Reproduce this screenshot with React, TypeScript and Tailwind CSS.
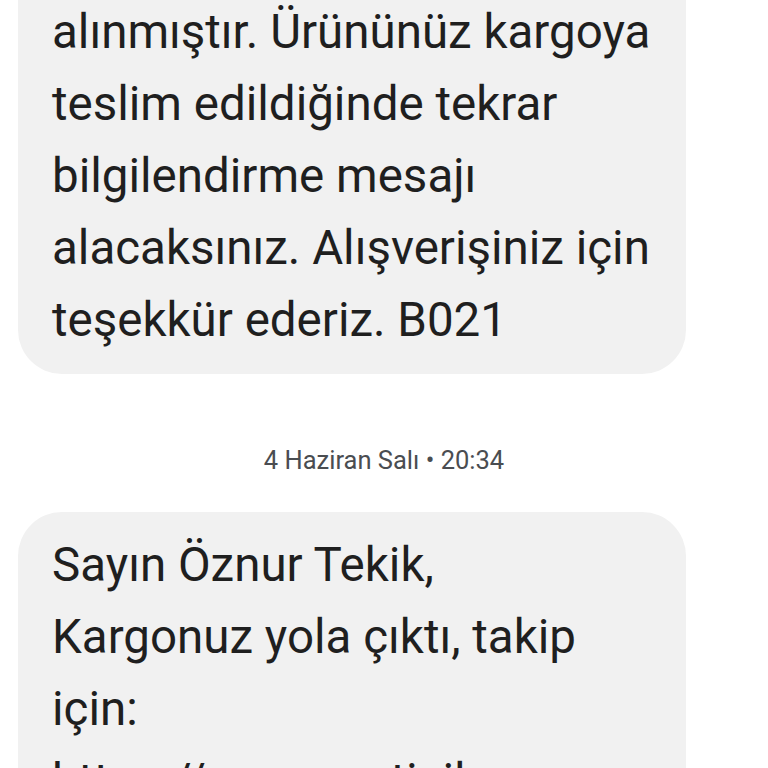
export default function App() {
  const font = { fontFamily: 'Roboto, "Noto Sans", sans-serif' };
  return (
    <div className="w-[768px] h-[768px] overflow-hidden bg-white" style={font}>
      <div className="-mt-[4px] flex flex-col">
        <div className="ml-[18px] w-[668px] rounded-b-[44px] bg-[#f1f1f1] pl-[34px] pr-[10px] pb-[18px] text-[47.5px] leading-[72px] text-[#1f1f1f]">
          <div>alınmıştır. Ürününüz kargoya</div>
          <div>teslim edildiğinde tekrar</div>
          <div>bilgilendirme mesajı</div>
          <div>alacaksınız. Alışverişiniz için</div>
          <div>teşekkür ederiz. B021</div>
        </div>
        <div className="h-[138px] pt-[72px] text-center text-[25.5px] leading-[28px] text-[#4a4d51]">
          4 Haziran Salı • 20:34
        </div>
        <div className="ml-[18px] w-[668px] rounded-t-[44px] bg-[#f1f1f1] pl-[34px] pr-[10px] pt-[17px] text-[47.5px] leading-[72px] text-[#1f1f1f]">
          <div>Sayın Öznur Tekik,</div>
          <div>Kargonuz yola çıktı, takip</div>
          <div>için:</div>
          <div>https://www.mnticil</div>
        </div>
      </div>
    </div>
  );
}
